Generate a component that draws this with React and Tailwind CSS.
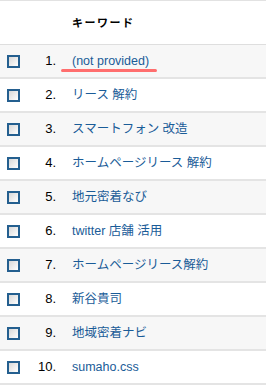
import React from 'react';

const keywords = [
  '(not provided)',
  'リース 解約',
  'スマートフォン 改造',
  'ホームページリース 解約',
  '地元密着なび',
  'twitter 店舗 活用',
  'ホームページリース解約',
  '新谷貴司',
  '地域密着ナビ',
  'sumaho.css',
];

const font = { fontFamily: '"Liberation Sans", "Noto Sans CJK JP", sans-serif' };

const Checkbox = () => (
  <div className="w-[13px] h-[13px] border-2 border-[#245f8f] bg-gradient-to-br from-[#d8d8d8] to-[#ffffff]" />
);

export default function App() {
  return (
    <div className="w-[266px] h-[392px] bg-white overflow-hidden border-t border-[#e2e2e2]" style={font}>
      <div className="h-[44px] flex items-center border-b border-[#dedede]">
        <div className="w-[72px]" />
        <div className="text-[11px] font-bold text-black tracking-[1.5px] pt-[2px]">キーワード</div>
      </div>
      {keywords.map((k, i) => (
        <div
          key={i}
          className={`h-[34px] flex items-center border-b-2 border-[#e4e4e4] ${i % 2 === 0 ? 'bg-[#f7f7f7]' : 'bg-white'}`}
        >
          <div className="w-[7px]" />
          <Checkbox />
          <div className="w-[37px] text-right text-[13px] text-black pr-[1px]">{i + 1}.</div>
          <div className="w-[15px]" />
          <div className="relative text-[12.5px] text-[#1a5c98] whitespace-nowrap">
            {k}
            {i === 0 && (
              <div className="absolute left-[-11px] top-[17px] w-[96px] h-[3px] rounded-full bg-[#ff6e6e] blur-[0.6px]" />
            )}
          </div>
        </div>
      ))}
    </div>
  );
}
